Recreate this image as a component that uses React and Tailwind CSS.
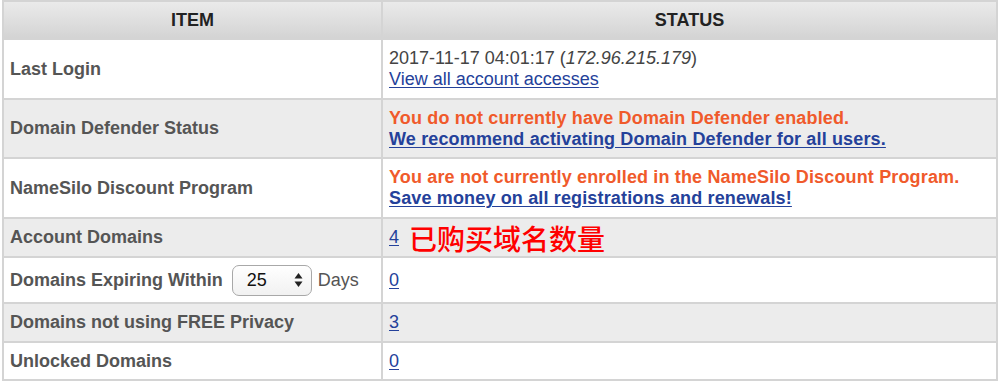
import React from 'react';

const rows = [
  { key: 'login', label: 'Last Login', h: 'h-[60px]' },
  { key: 'defender', label: 'Domain Defender Status', h: 'h-[59px]' },
  { key: 'discount', label: 'NameSilo Discount Program', h: 'h-[60px]' },
  { key: 'domains', label: 'Account Domains', h: 'h-[39px]' },
  { key: 'expiring', label: null, h: 'h-[46px]' },
  { key: 'privacy', label: 'Domains not using FREE Privacy', h: 'h-[39px]' },
  { key: 'unlocked', label: 'Unlocked Domains', h: 'h-[38px]' },
];

function Link({ children, bold }) {
  return (
    <a href="#" className={`text-[#24419a] underline underline-offset-2 ${bold ? 'font-bold' : ''}`}>
      {children}
    </a>
  );
}

function DaysSelect() {
  return (
    <span className="inline-flex items-center justify-between w-[80px] h-[31px] ml-[9px] mr-[6px] pl-[14px] pr-[8px] rounded-[7px] border border-[#a8a8a8] bg-gradient-to-b from-white to-[#f1f1f1] text-[#111] font-normal text-[18px]">
      25
      <svg width="9" height="16" viewBox="0 0 9 16">
        <path d="M4.5 1 L8.5 6.5 H0.5 Z" fill="#222" />
        <path d="M4.5 15 L8.5 9.5 H0.5 Z" fill="#222" />
      </svg>
    </span>
  );
}

function Status({ id }) {
  switch (id) {
    case 'login':
      return (
        <div className="leading-[21px]">
          <div className="text-[#444]">
            2017-11-17 04:01:17 (<i>172.96.215.179</i>)
          </div>
          <Link>View all account accesses</Link>
        </div>
      );
    case 'defender':
      return (
        <div className="leading-[21px] font-bold tracking-[0.15px]">
          <div className="text-[#f05a2b]">You do not currently have Domain Defender enabled.</div>
          <Link bold>We recommend activating Domain Defender for all users.</Link>
        </div>
      );
    case 'discount':
      return (
        <div className="leading-[21px] font-bold tracking-[0.15px]">
          <div className="text-[#f05a2b]">You are not currently enrolled in the NameSilo Discount Program.</div>
          <Link bold>Save money on all registrations and renewals!</Link>
        </div>
      );
    case 'domains':
      return (
        <div className="flex items-center gap-[10px]">
          <Link>4</Link>
          <span className="text-[#ff0000] text-[28px] leading-none font-medium font-['Noto_Sans_CJK_SC',sans-serif]">
            已购买域名数量
          </span>
        </div>
      );
    case 'expiring':
      return <Link>0</Link>;
    case 'privacy':
      return <Link>3</Link>;
    default:
      return <Link>0</Link>;
  }
}

export default function App() {
  return (
    <div className="w-[1000px] h-[382px] bg-white font-['Liberation_Sans',Arial,sans-serif] text-[18px]">
      <table className="ml-[2px] w-[996px] border-collapse border-2 border-[#d4d4d4]">
        <thead>
          <tr className="h-[38px] bg-gradient-to-b from-[#ebebeb] to-[#d3d3d3]">
            <th className="w-[379px] border-2 border-[#d4d4d4] font-bold text-[#222]">ITEM</th>
            <th className="border-2 border-[#d4d4d4] font-bold text-[#222]">STATUS</th>
          </tr>
        </thead>
        <tbody>
          {rows.map((r, i) => (
            <tr key={r.key} className={`${r.h} ${i % 2 ? 'bg-[#ececec]' : 'bg-white'}`}>
              <td className="border-2 border-[#d4d4d4] pl-[6px] font-bold text-[#555]">
                {r.label ?? (
                  <span className="inline-flex items-center">
                    Domains Expiring Within
                    <DaysSelect />
                    <span className="font-normal">Days</span>
                  </span>
                )}
              </td>
              <td className="border-2 border-[#d4d4d4] pl-[6px]">
                <Status id={r.key} />
              </td>
            </tr>
          ))}
        </tbody>
      </table>
    </div>
  );
}
